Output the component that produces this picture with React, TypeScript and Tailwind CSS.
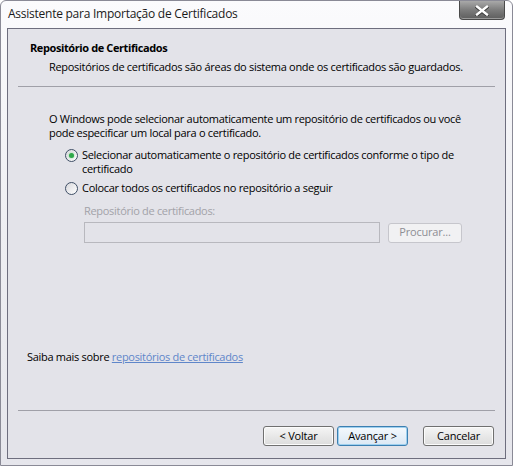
const font = { fontFamily: '"Open Sans", "Noto Sans", sans-serif' };

function Radio({ checked }: { checked?: boolean }) {
  return (
    <span className="relative mt-[1px] inline-flex h-[13px] w-[13px] shrink-0 items-center justify-center rounded-full border border-[#3f4f66] bg-gradient-to-br from-[#d8d8dc] to-[#ffffff]">
      {checked && (
        <span className="h-[5px] w-[5px] rounded-full bg-[#2fa84a] shadow-[0_0_2px_#7fdc8a]" />
      )}
    </span>
  );
}

function Button({
  label,
  isDefault,
  disabled,
  className = "",
}: {
  label: string;
  isDefault?: boolean;
  disabled?: boolean;
  className?: string;
}) {
  const base = disabled
    ? "border-[#c6c6cc] bg-[#f1f1f3] text-[#8e8e94]"
    : isDefault
    ? "border-[#3c7fb1] bg-gradient-to-b from-[#f4f9fd] to-[#dbe8f4] text-black shadow-[inset_0_0_0_1px_#9ed0ef]"
    : "border-[#707070] bg-gradient-to-b from-[#f5f5f5] to-[#dcdcdc] text-black shadow-[inset_0_0_0_1px_#fcfcfc]";
  return (
    <div
      className={`flex h-[20px] w-[71px] items-center justify-center rounded-[3px] border text-[11px] tracking-[-0.2px] ${base} ${className}`}
    >
      {label}
    </div>
  );
}

export default function App() {
  return (
    <div
      className="h-[466px] w-[513px] overflow-hidden bg-white text-[11px] tracking-[-0.3px] text-black"
      style={font}
    >
      <div className="flex h-full w-full flex-col rounded-t-[6px] border border-[#8a8a96] bg-gradient-to-b from-[#fbfbfd] via-[#eeeef2] to-[#e6e6ec] px-[6px] pb-[6px]">
        {/* title bar */}
        <div className="flex h-[27px] items-start justify-between">
          <div className="pl-[1px] pt-[5px] text-[12px] leading-[16px] tracking-[-0.25px] text-[#1a1a1a]">
            Assistente para Importação de Certificados
          </div>
          <div className="mr-[1px] flex h-[19px] w-[46px] items-center justify-center rounded-b-[4px] border border-t-0 border-[#4a4a4a] bg-gradient-to-b from-[#a9a9a9] via-[#7c7c7c] to-[#5e5e5e] shadow-[inset_0_-1px_0_#9a9a9a]">
            <svg width="14" height="11" viewBox="0 0 14 11">
              <path
                d="M2 1.5 L12 9.5 M12 1.5 L2 9.5"
                stroke="#3a3a3a"
                strokeWidth="3.4"
                strokeLinecap="square"
                transform="translate(0 0.6)"
              />
              <path
                d="M2 1.5 L12 9.5 M12 1.5 L2 9.5"
                stroke="#ffffff"
                strokeWidth="2.4"
                strokeLinecap="square"
              />
            </svg>
          </div>
        </div>

        {/* client area */}
        <div className="flex flex-1 flex-col whitespace-nowrap border border-[#6e6e7e] bg-[#e3e3e9]">
          <div className="pl-[22px] pt-[12px] font-bold leading-[14px] tracking-[-0.4px]">
            Repositório de Certificados
          </div>
          <div className="pl-[41px] pt-[5px] leading-[14px]">
            Repositórios de certificados são áreas do sistema onde os certificados são guardados.
          </div>

          <div className="mx-[10px] mt-[12px] h-[2px] border-t border-[#a0a0a8] border-b-white" />

          <div className="mt-[24px] pl-[41px] leading-[14px]">
            O Windows pode selecionar automaticamente um repositório de certificados ou você
            <br />
            pode especificar um local para o certificado.
          </div>

          <div className="mt-[8px] flex items-start gap-[4px] pl-[57px] leading-[14px]">
            <Radio checked />
            <div>
              Selecionar automaticamente o repositório de certificados conforme o tipo de
              <br />
              certificado
            </div>
          </div>

          <div className="mt-[5px] flex items-start gap-[4px] pl-[57px] leading-[14px]">
            <Radio />
            <div>Colocar todos os certificados no repositório a seguir</div>
          </div>

          <div className="mt-[9px] pl-[76px] leading-[14px] text-[#a2a2a8]">
            Repositório de certificados:
          </div>

          <div className="mt-[4px] flex items-center gap-[8px] pl-[76px]">
            <div className="h-[21px] w-[296px] border border-[#b8b8be] bg-[#e3e3e9]" />
            <Button label="Procurar..." disabled className="w-[74px]" />
          </div>

          <div className="flex-1" />

          <div className="pl-[19px] leading-[14px]">
            Saiba mais sobre{" "}
            <span className="text-[#5f86c9] underline">repositórios de certificados</span>
          </div>

          <div className="mx-[10px] mt-[46px] h-[2px] border-t border-[#a0a0a8] border-b-white" />

          <div className="flex justify-end gap-[3px] pb-[12px] pr-[11px] pt-[14px]">
            <Button label="< Voltar" />
            <Button label="Avançar >" isDefault className="mr-[12px]" />
            <Button label="Cancelar" />
          </div>
        </div>
      </div>
    </div>
  );
}
